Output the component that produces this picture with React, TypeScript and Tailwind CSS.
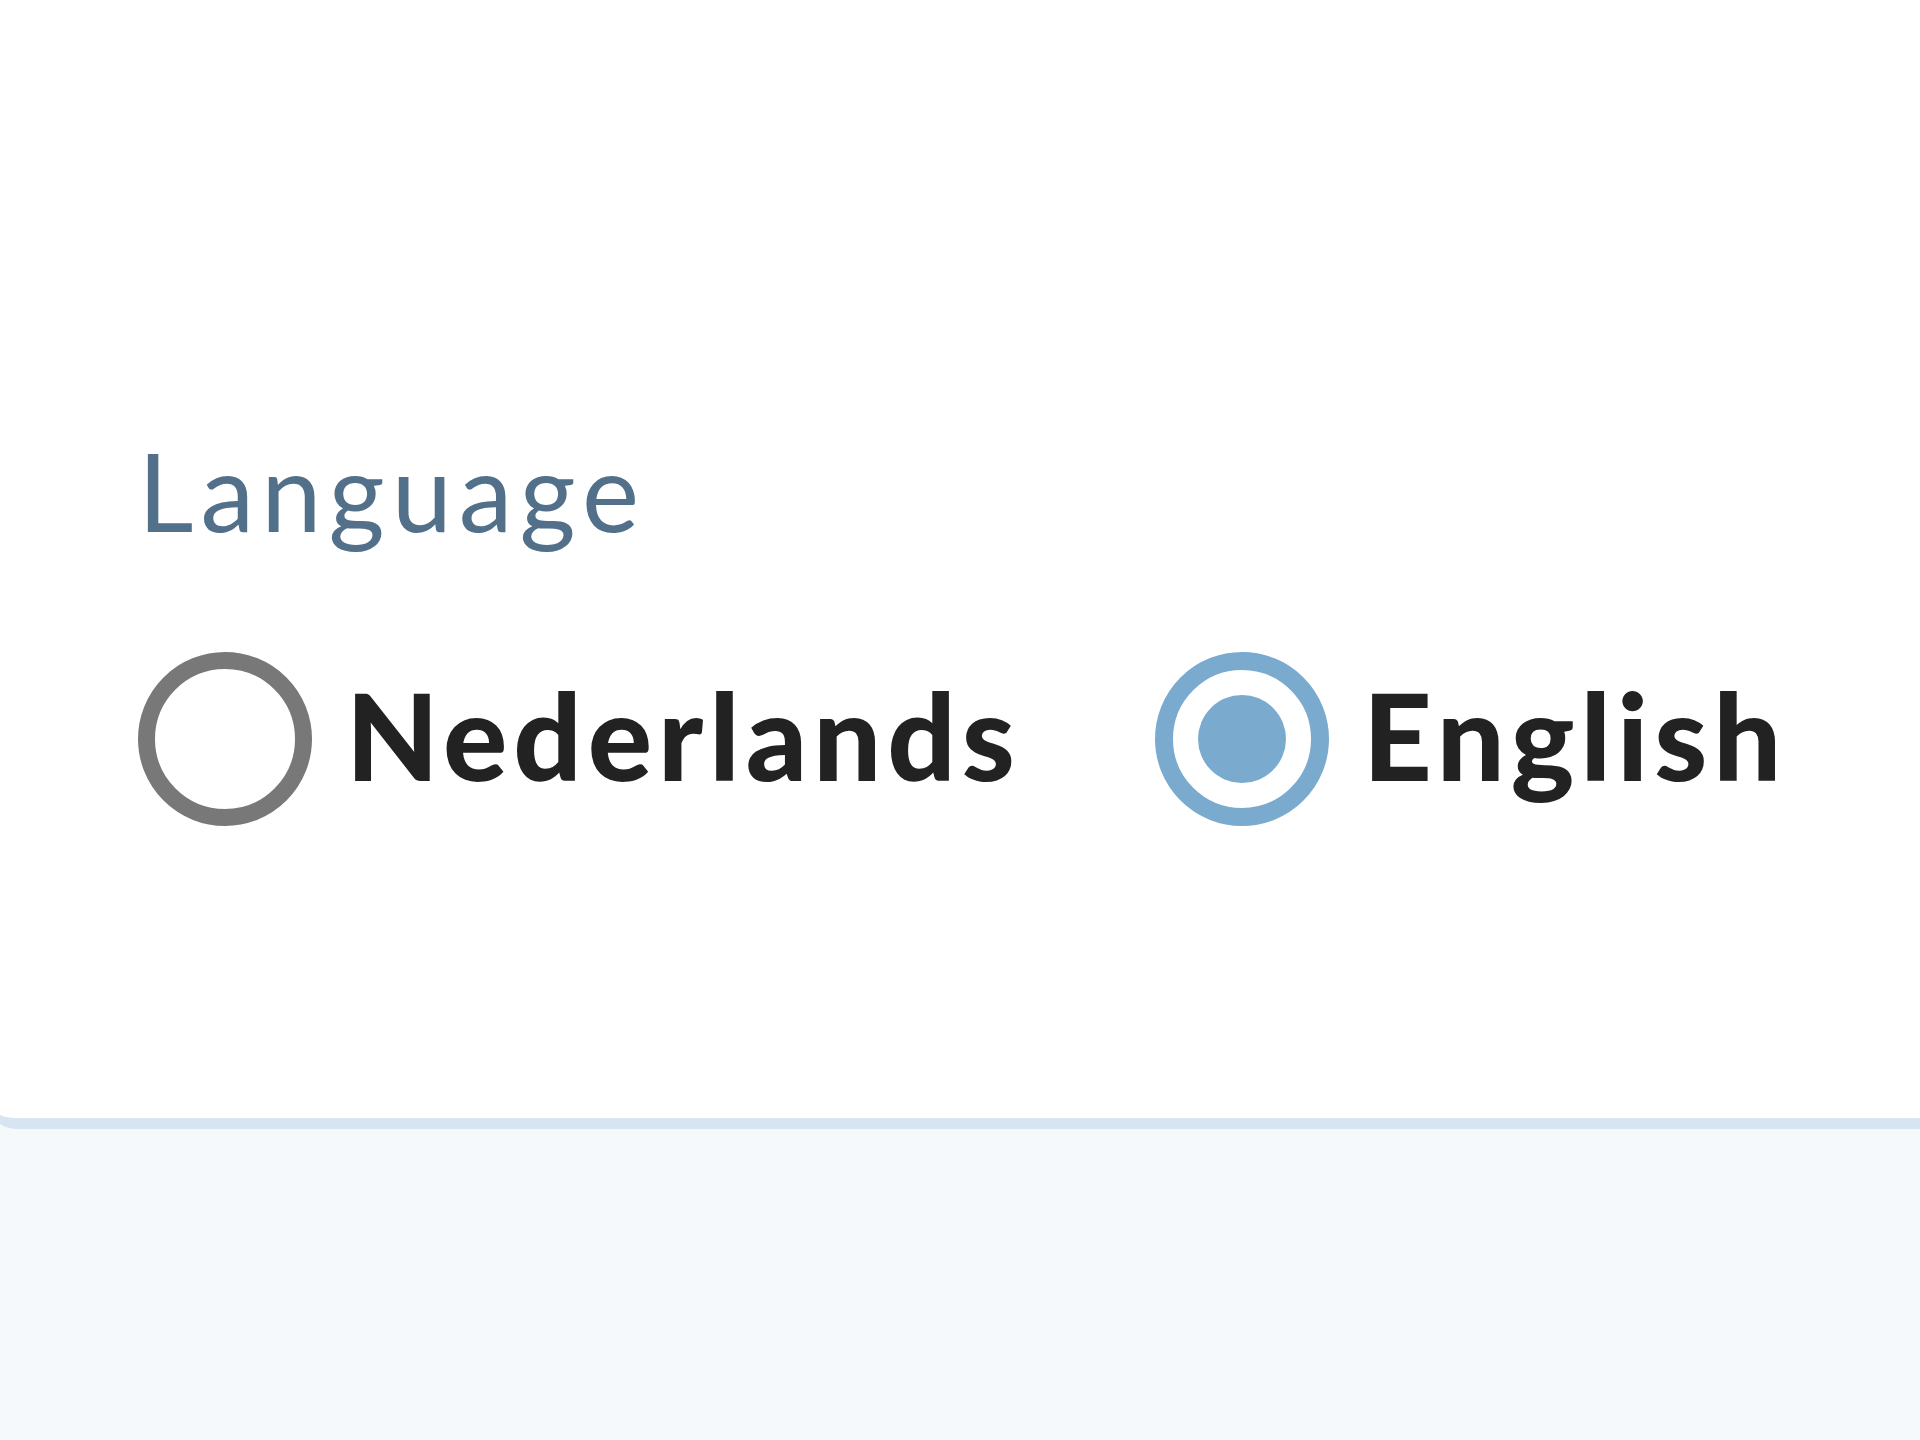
import { useState } from 'react';

const options = [
  { id: 'nl', label: 'Nederlands' },
  { id: 'en', label: 'English' },
];

function Radio({ checked }: { checked: boolean }) {
  if (checked) {
    return (
      <span className="flex h-[174px] w-[174px] shrink-0 items-center justify-center rounded-full border-[18px] border-[#7aaacd]">
        <span className="h-[88px] w-[88px] rounded-full bg-[#7aaacd]" />
      </span>
    );
  }
  return <span className="block h-[174px] w-[174px] shrink-0 rounded-full border-[17px] border-[#777877]" />;
}

export default function App() {
  const [lang, setLang] = useState('en');

  return (
    <div className="min-h-screen bg-[#f5f9fc] font-['Lato',sans-serif]">
      <section className="-ml-3 h-[1129px] rounded-bl-[28px] border-b-[11px] border-[#d7e4f1] bg-white pl-[160px] pt-[436px]">
        <h2 className="-ml-[10px] text-[108px] font-normal leading-none tracking-[0.065em] text-[#52708a]">Language</h2>

        <div className="mt-[108px] flex items-center -ml-[10px]">
          {options.map((opt) => (
            <label
              key={opt.id}
              onClick={() => setLang(opt.id)}
              className={`flex cursor-pointer items-center gap-[34px] ${opt.id === 'nl' ? 'w-[1017px]' : ''}`}
            >
              <Radio checked={lang === opt.id} />
              <span className="pb-[8px] text-[120px] font-black leading-none tracking-[0.05em] text-[#222222]">
                {opt.label}
              </span>
            </label>
          ))}
        </div>
      </section>
    </div>
  );
}
